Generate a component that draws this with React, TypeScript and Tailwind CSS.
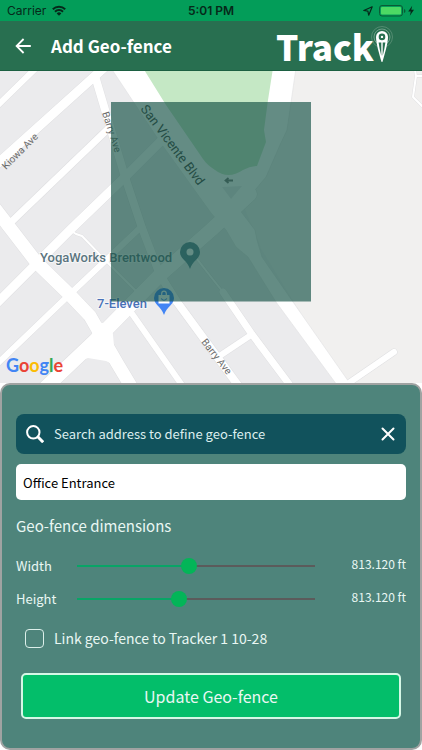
import { useState } from "react";
import type { CSSProperties } from "react";

// ---------- Status bar ----------
function StatusBar() {
  return (
    <div className="grid h-[21px] grid-cols-3 items-center bg-[#039d59] px-[7px] font-['Inter',sans-serif] text-[12px] leading-4 text-[#06291a]">
      <div className="flex items-center gap-1.5">
        <span>Carrier</span>
        <svg width="14" height="11" viewBox="0 0 14 11" aria-label="Wi-Fi">
          <path d="M0.8 4.2a9 9 0 0 1 12.4 0" fill="none" stroke="currentColor" strokeWidth="2" />
          <path d="M3 6.7a5.8 5.8 0 0 1 8 0" fill="none" stroke="currentColor" strokeWidth="2" />
          <path d="M7 10.8 4.7 8.4a3.3 3.3 0 0 1 4.6 0z" fill="currentColor" />
        </svg>
      </div>
      <span className="text-center font-semibold">5:01 PM</span>
      <div className="flex items-center justify-end gap-1.5">
        <svg width="10" height="10" viewBox="0 0 10 10" aria-label="Location">
          <path d="M9.2 0.8 5.7 9.2 4.9 5.1 0.8 4.5z" fill="none" stroke="currentColor" strokeWidth="1.2" strokeLinejoin="round" />
        </svg>
        <svg width="36" height="12" viewBox="0 0 36 12" aria-label="Battery charging">
          <rect x="0.5" y="0.5" width="23" height="10.5" rx="2.5" fill="none" stroke="#0a5a36" />
          <rect x="2" y="2" width="20" height="7.5" rx="1" fill="#4cd964" />
          <path d="M25 4v4q1.5-.6 1.5-2T25 4z" fill="#0a5a36" />
          <path d="M33.2 0.8 29.2 6.6h2.6l-1 4.2 4.2-6h-2.7z" fill="currentColor" />
        </svg>
      </div>
    </div>
  );
}

// ---------- Header ----------
function Logo() {
  return (
    <div className="flex items-start text-white" aria-label="Tracki">
      <span className="text-[35px] leading-[44px] font-black">Track</span>
      <svg className="-ml-1 mt-0.5" width="24" height="38" viewBox="0 0 24 38">
        <circle cx="12" cy="11" r="10.5" fill="none" stroke="#6f9d87" strokeWidth="0.6" />
        <circle cx="12" cy="11" r="8" fill="none" stroke="#8fb3a2" strokeWidth="0.7" />
        <path
          fillRule="evenodd"
          d="M12 5a6 6 0 0 1 6 6c0 6-3.5 18-5.6 25h-.8C9.5 29 6 17 6 11a6 6 0 0 1 6-6zM12 7.6a3.3 3.3 0 1 0 0 6.600 3.300 3.300 0 0 0 0-6.600z"
          fill="#fff"
        />
        <path d="M11.3 16.5H8.6Q9.5 23 11.3 30zM12.7 16.5h2.7Q14.5 23 12.7 30z" fill="#286f50" />
        <circle cx="12" cy="10.9" r="1.2" fill="#fff" />
      </svg>
    </div>
  );
}

function Header() {
  return (
    <header className="flex h-[50px] items-center justify-between border-b border-[#1c6042] bg-[#286f50] pr-[28px] pl-[15px]">
      <div className="flex items-center gap-5">
        <button type="button" aria-label="Back" className="text-white">
          <svg width="16" height="16" viewBox="0 0 16 16" fill="none" stroke="currentColor" strokeWidth="1.8">
            <path d="M15.8 8H2M8.6 1 1.6 8l7 7" />
          </svg>
        </button>
        <h1 className="text-[17px] leading-6 font-bold text-white">Add Geo-fence</h1>
      </div>
      <Logo />
    </header>
  );
}

// ---------- Map ----------
const ROADS = [
  { d: "M-4 107 36 68", w: 6 },
  { d: "M-4 165 106 66", w: 9 },
  { d: "M95 76 125 177 142 228 160 275 177 302 240 388", w: 8 },
  { d: "M109 128 6 227", w: 7 },
  { d: "M164 138 125 177 70 230-4 304", w: 9 },
  { d: "M-6 207 37 263 70 295 90 316 102 337 117 363 132 388", w: 13 },
  { d: "M-4 365 68 296 140 228", w: 6 },
  { d: "M70 230 76 234 82 236 107 262 135 290", w: 2 },
  { d: "M45 388 103 333 160 275 211 230 250 194", w: 14 },
  { d: "M128 308 184 388", w: 6 },
  { d: "M190 250 211 277 223 292", w: 2 },
  { d: "M223 292 251 333 292 388", w: 7 },
  { d: "M251 335 218 357", w: 6 },
  { d: "M394 352 346 385", w: 6 },
  { d: "M415 70 416 76 425 76M416 76 413 97 424 108", w: 2 },
];

function MapView() {
  return (
    <section className="relative min-h-[312px] flex-1 overflow-hidden bg-[#ebebed]">
      <svg
        className="absolute inset-0 h-full w-full"
        viewBox="0 71 422 312"
        preserveAspectRatio="xMidYMid slice"
        fontFamily="Roboto, sans-serif"
      >
        <rect x="0" y="71" width="422" height="312" fill="#ebebed" />
        <path d="M290 68H424V385H345L262 250 245 209 280 145z" fill="#f1f0ef" />

        {/* road casings, then the roads */}
        <g fill="none" stroke="#e0e0e2" strokeLinecap="round" strokeLinejoin="round">
          {ROADS.map((r) => (
            <path key={r.d} d={r.d} strokeWidth={r.w + 1} />
          ))}
        </g>
        <path
          d="M111 68 160 142 211 213 226 230 236 247 248 257 276 302 337 385H351L293 302 262 257 257 240 255 230 239 209 266 177 280 145 287 130 296 68z"
          fill="#fff"
          stroke="#e0e0e2"
          strokeWidth="0.6"
        />
        <g fill="none" stroke="#fff" strokeLinecap="round" strokeLinejoin="round">
          {ROADS.map((r) => (
            <path key={r.d} d={r.d} strokeWidth={r.w} />
          ))}
        </g>
        <path d="M98 322 112 325 116 366 106 361 88 358 78 362z" fill="#fff" />
        <path
          d="M143 68H273L268 100 264 130 266 142 257 166Q250 166 243 170 228 180 215 170 207 165 203 159L166 105z"
          fill="#c5e8c5"
        />
        <path d="M222 187 242 186 231 199z" fill="#ebebed" />
        <path d="M233 180.5H226M228.5 178 225.5 180.5l3 2.5" fill="none" stroke="#777" strokeWidth="1.8" />

        {/* street names */}
        <g fill="#6b6b6b" fontSize="10">
          <text transform="translate(6 170) rotate(-45)">Kiowa Ave</text>
          <text transform="translate(102 113) rotate(72)">Barry Ave</text>
          <text transform="translate(201 342) rotate(52)">Barry Ave</text>
          <text transform="translate(140 109) rotate(53)" fontSize="13" fill="#444">San Vicente Blvd</text>
        </g>

        {/* places */}
        <g fontSize="13" fontWeight="500" stroke="#fff" strokeWidth="2" paintOrder="stroke" strokeLinejoin="round">
          <text x="40" y="262" fill="#5b7580" strokeOpacity="0.6">YogaWorks Brentwood</text>
          <text x="97" y="308" fill="#4a72b8" strokeOpacity="0.6">7-Eleven</text>
        </g>
        <path d="M190 242a10 10 0 0 1 10 10c0 7-7 8-10 17-3-9-10-10-10-17a10 10 0 0 1 10-10z" fill="#5b8492" />
        <circle cx="190" cy="252" r="3.5" fill="#fff" />
        <path d="M164 288a10 10 0 0 1 10 10c0 7-7 8-10 17-3-9-10-10-10-17a10 10 0 0 1 10-10z" fill="#4285f4" />
        <path d="M158.5 295h11v8.5h-11z" fill="#fff" />
        <path d="M161.7 295v-1.5a2.3 2.3 0 0 1 4.6 0V295" fill="none" stroke="#fff" strokeWidth="1.2" />
        <path d="M161.2 298.5q2.8 3.5 5.6 0" fill="none" stroke="#4285f4" strokeWidth="1.2" />

        {/* fence */}
        <rect x="111" y="102" width="200" height="199.5" fill="#145045" fillOpacity="0.66" />

        <text x="6" y="372" fontFamily="Lato, sans-serif" fontSize="18" fontWeight="700">
          <tspan fill="#4285f4">G</tspan>
          <tspan fill="#ea4335">o</tspan>
          <tspan fill="#fbbc05">o</tspan>
          <tspan fill="#4285f4">g</tspan>
          <tspan fill="#34a853">l</tspan>
          <tspan fill="#ea4335">e</tspan>
        </text>
      </svg>
    </section>
  );
}

// ---------- Form ----------
interface DimensionProps {
  id: string;
  label: string;
  value: number;
  onChange: (v: number) => void;
}

function DimensionRow({ id, label, value, onChange }: DimensionProps) {
  return (
    <div className="flex h-5 items-center">
      <label htmlFor={id} className="w-[61px] text-[13px] leading-5">{label}</label>
      <input
        id={id}
        type="range"
        min={0}
        max={1000}
        value={value}
        onChange={(e) => onChange(Number(e.target.value))}
        style={{ "--fill": `${value / 10}%` } as CSSProperties}
        className="h-4 min-w-0 flex-1 appearance-none bg-transparent [&::-webkit-slider-runnable-track]:h-[2px] [&::-webkit-slider-runnable-track]:bg-[linear-gradient(to_right,#08a566_var(--fill),#5b5b5b_var(--fill))] [&::-webkit-slider-thumb]:-mt-[7px] [&::-webkit-slider-thumb]:size-4 [&::-webkit-slider-thumb]:appearance-none [&::-webkit-slider-thumb]:rounded-full [&::-webkit-slider-thumb]:bg-[#03b558]"
      />
      <span className="w-[91px] self-start text-right text-[12px] leading-4">813.120 ft</span>
    </div>
  );
}

function FencePanel() {
  const [query, setQuery] = useState("");
  const [name, setName] = useState("Office Entrance");
  const [width, setWidth] = useState(468);
  const [height, setHeight] = useState(423);
  const [linked, setLinked] = useState(false);

  return (
    <form
      onSubmit={(e) => e.preventDefault()}
      className="flex flex-col rounded-[10px] border-2 border-[#a0a3a2] bg-[#4e847b] px-[14px] pt-[29px] pb-[29px] text-[#e9f7f3]"
    >
      <div className="flex h-10 items-center gap-2.5 rounded-[8px] bg-[#11525c] px-[10px]">
        <svg width="18" height="18" viewBox="0 0 18 18" fill="none" stroke="#fff" strokeWidth="2" aria-hidden="true">
          <circle cx="7.3" cy="7.3" r="6.2" />
          <path d="M11.8 11.8 17.2 17.2" strokeWidth="3" />
        </svg>
        <input
          type="text"
          aria-label="Search address"
          placeholder="Search address to define geo-fence"
          value={query}
          onChange={(e) => setQuery(e.target.value)}
          className="min-w-0 flex-1 bg-transparent text-[13px] leading-5 outline-none placeholder:text-[#dceeee]"
        />
        <button type="button" aria-label="Clear search" onClick={() => setQuery("")}>
          <svg width="16" height="16" viewBox="0 0 16 16" stroke="#fff" strokeWidth="2" strokeLinecap="round">
            <path d="M2.5 2.5 13.5 13.5M13.5 2.5 2.5 13.5" />
          </svg>
        </button>
      </div>

      <input
        type="text"
        aria-label="Geo-fence name"
        value={name}
        onChange={(e) => setName(e.target.value)}
        className="mt-2.5 h-9 rounded-[5px] bg-white px-[7px] text-[13px] leading-5 text-black outline-none"
      />

      <h2 className="mt-3.5 text-[15px] leading-6">Geo-fence dimensions</h2>

      <div className="mt-[18px] flex flex-col gap-[13px]">
        <DimensionRow id="fence-width" label="Width" value={width} onChange={setWidth} />
        <DimensionRow id="fence-height" label="Height" value={height} onChange={setHeight} />
      </div>

      <label className="mt-[19px] flex h-5 items-center gap-2.5 pl-[9px] text-[14px] leading-5">
        <input
          type="checkbox"
          checked={linked}
          onChange={(e) => setLinked(e.target.checked)}
          className="size-[19px] appearance-none rounded-[4px] border border-[#dcefea] checked:bg-[#03b558]"
        />
        Link geo-fence to Tracker 1 10-28
      </label>

      <button
        type="submit"
        className="mx-[5px] mt-[25px] h-[46px] rounded-[5px] border-2 border-[#d5f7e6] bg-[#03be6a] text-[16px] leading-6"
      >
        Update Geo-fence
      </button>
    </form>
  );
}

export default function App() {
  return (
    <main className="flex min-h-screen flex-col bg-white font-['Noto_Sans_CJK_SC',sans-serif]">
      <StatusBar />
      <Header />
      <MapView />
      <FencePanel />
    </main>
  );
}
